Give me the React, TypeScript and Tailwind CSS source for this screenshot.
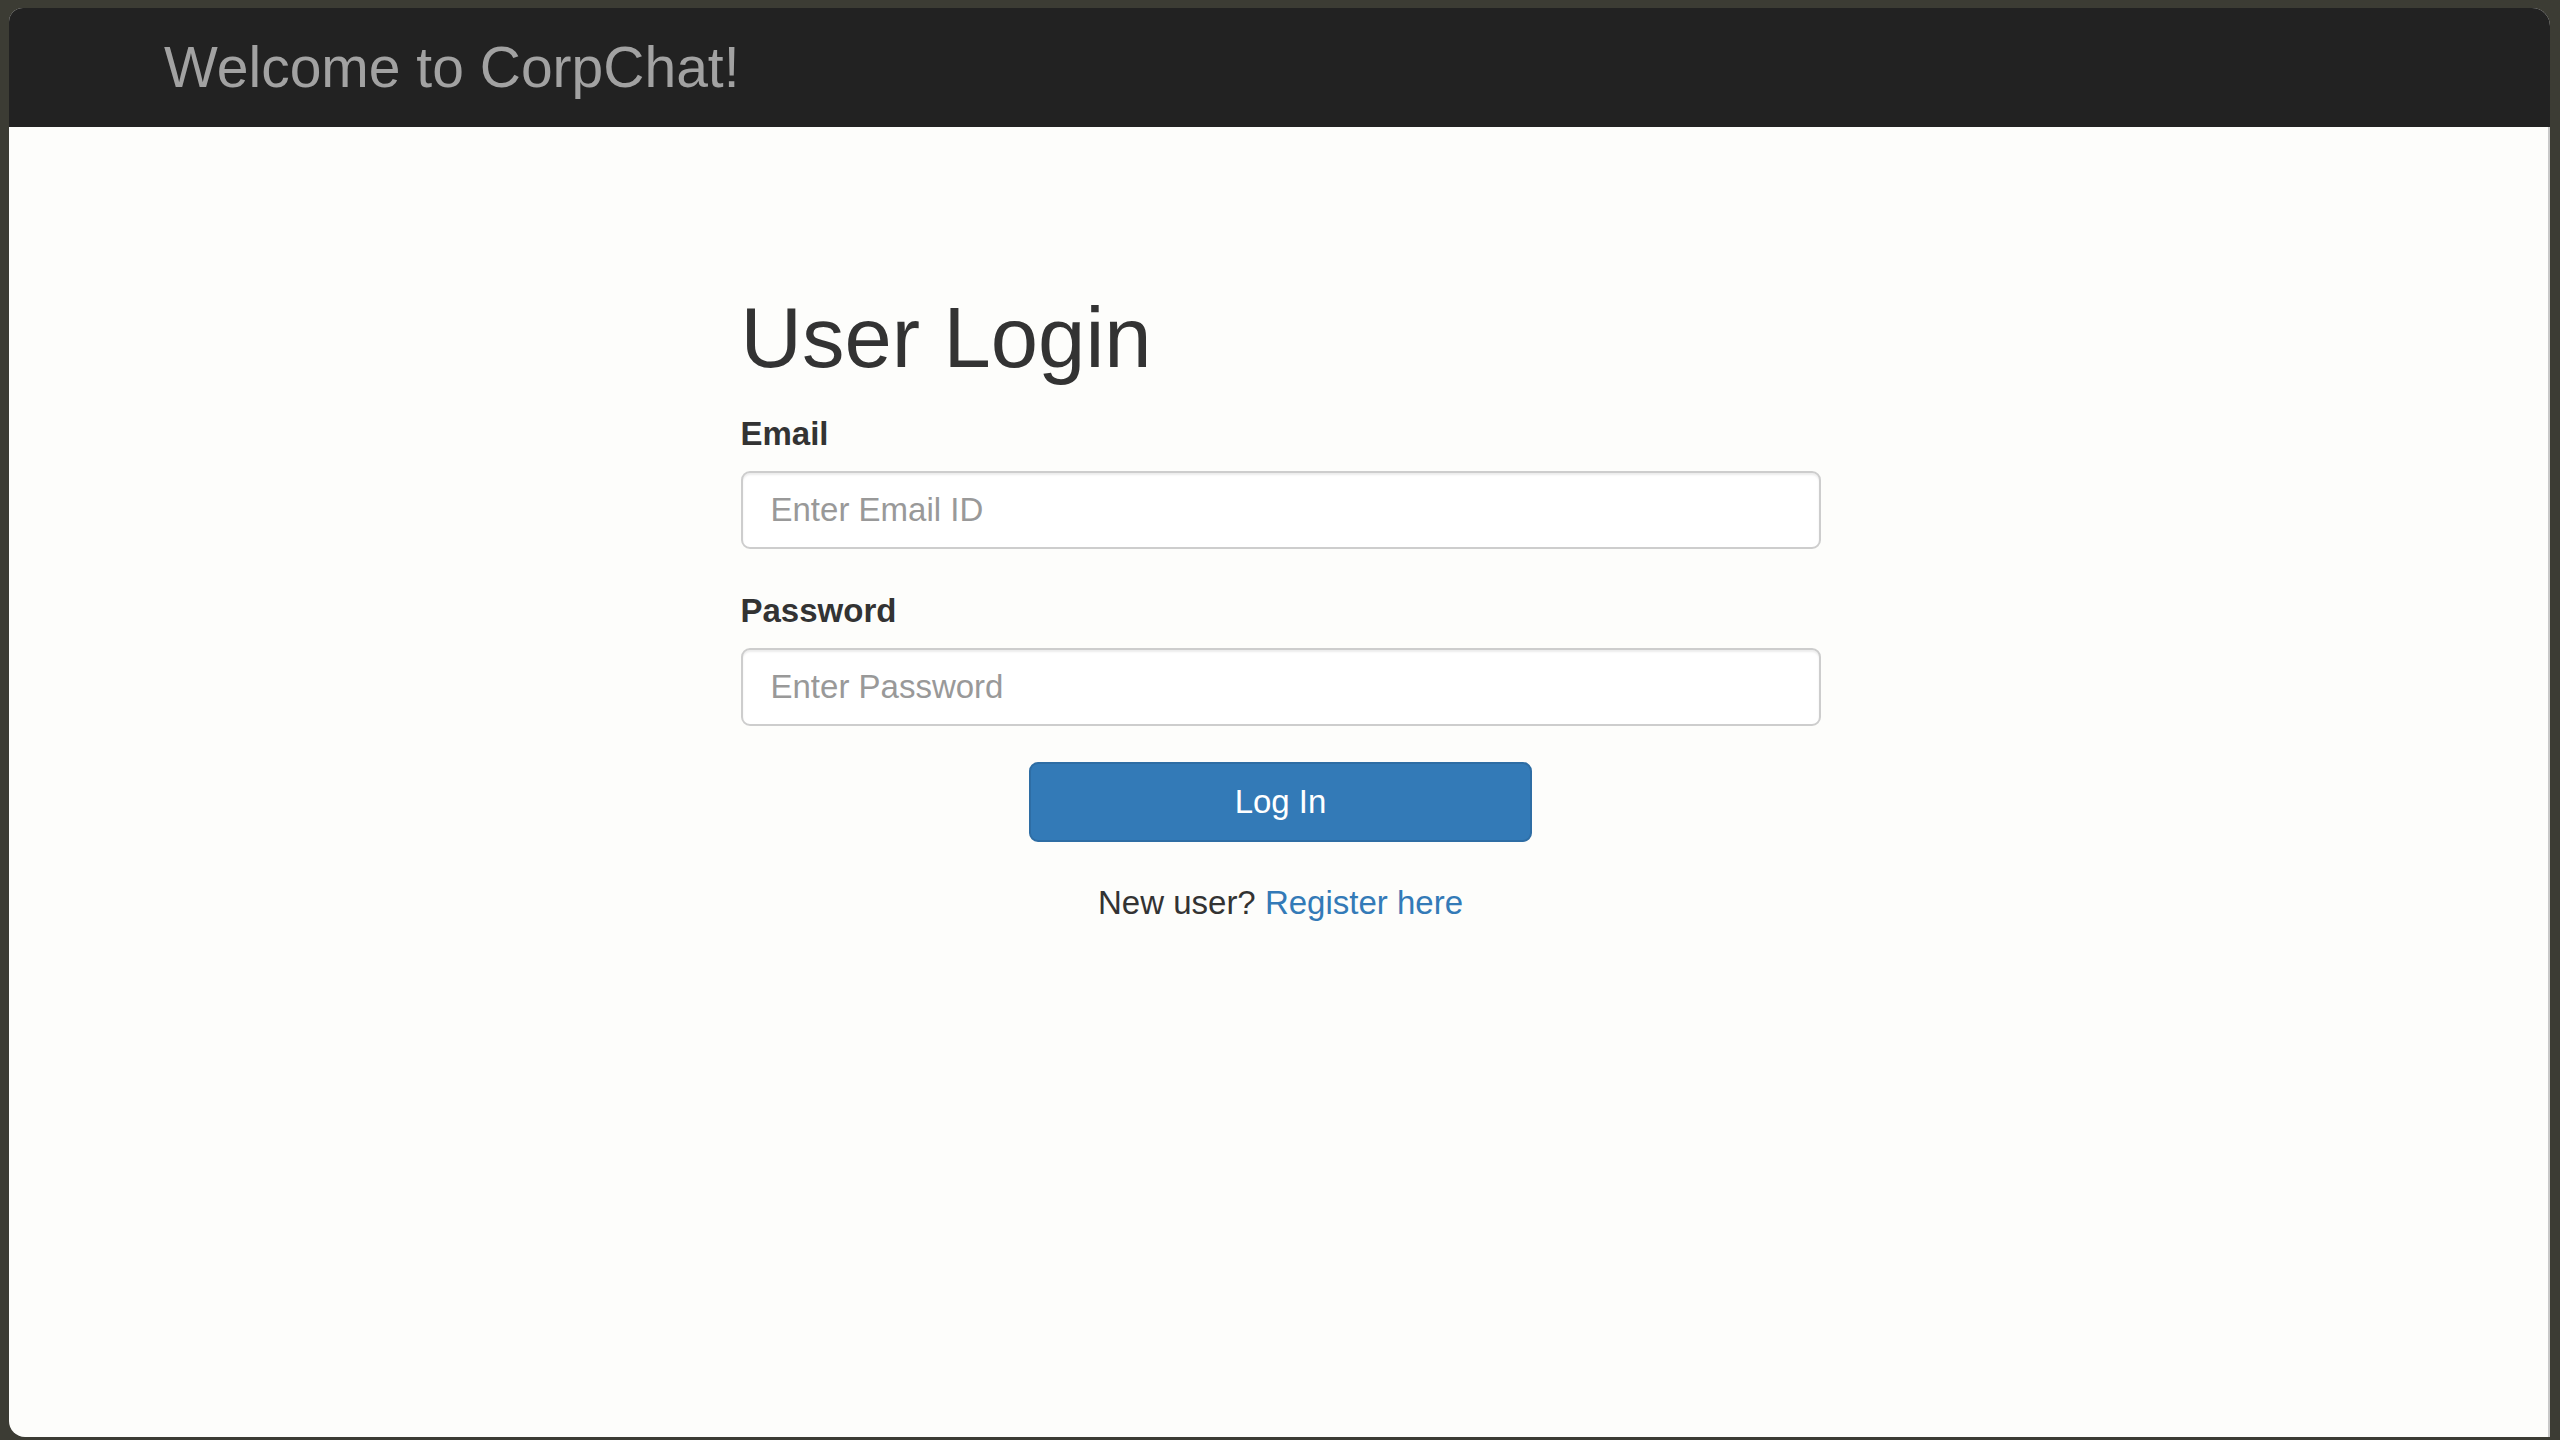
import { useState } from "react"

export default function App() {
  const [email, setEmail] = useState("")
  const [password, setPassword] = useState("")

  return (
    <div className="flex h-screen w-full bg-[#3c3c34] pt-[8px] pl-[9px] pr-[10px] pb-[3px] font-['Liberation_Sans',Arial,sans-serif]">
      <div className="flex flex-1 flex-col overflow-hidden rounded-tl-[14px] rounded-tr-[18px] rounded-bl-[16px] bg-[#fdfdfb]">
        {/* Barra superior */}
        <header className="flex h-[119px] shrink-0 items-center bg-[#222222] pl-[155px]">
          <span className="text-[57px] leading-none text-[#a2a2a2]">Welcome to CorpChat!</span>
        </header>

        {/* Formulário de login */}
        <main className="flex-1 border-r-2 border-[#c8c8c8] pl-[4px]">
          <form
            className="mx-auto flex w-[1080px] flex-col pt-[164px]"
            onSubmit={(e) => e.preventDefault()}
          >
            <h1 className="mb-[25px] text-[85px] leading-[1.1] text-[#333333]">User Login</h1>

            <label htmlFor="email" className="mb-[14px] text-[33px] font-bold leading-[47px] text-[#333333]">
              Email
            </label>
            <input
              id="email"
              type="email"
              value={email}
              onChange={(e) => setEmail(e.target.value)}
              placeholder="Enter Email ID"
              className="mb-[38px] h-[78px] rounded-[9px] border-2 border-[#cdcdcd] bg-white px-[28px] text-[33px] text-[#555555] shadow-[inset_0_2px_2px_rgba(0,0,0,0.075)] outline-none placeholder:text-[#999999]"
            />

            <label htmlFor="password" className="mb-[14px] text-[33px] font-bold leading-[47px] text-[#333333]">
              Password
            </label>
            <input
              id="password"
              type="password"
              value={password}
              onChange={(e) => setPassword(e.target.value)}
              placeholder="Enter Password"
              className="mb-[36px] h-[78px] rounded-[9px] border-2 border-[#cdcdcd] bg-white px-[28px] text-[33px] text-[#555555] shadow-[inset_0_2px_2px_rgba(0,0,0,0.075)] outline-none placeholder:text-[#999999]"
            />

            <button
              type="submit"
              className="mx-auto mb-[37px] h-[80px] w-[503px] rounded-[9px] border-2 border-[#2e6da4] bg-[#337ab7] text-[33px] text-white"
            >
              Log In
            </button>

            <p className="text-center text-[33px] leading-[47px] text-[#333333]">
              New user? <a href="#" className="text-[#337ab7]">Register here</a>
            </p>
          </form>
        </main>
      </div>
    </div>
  )
}
